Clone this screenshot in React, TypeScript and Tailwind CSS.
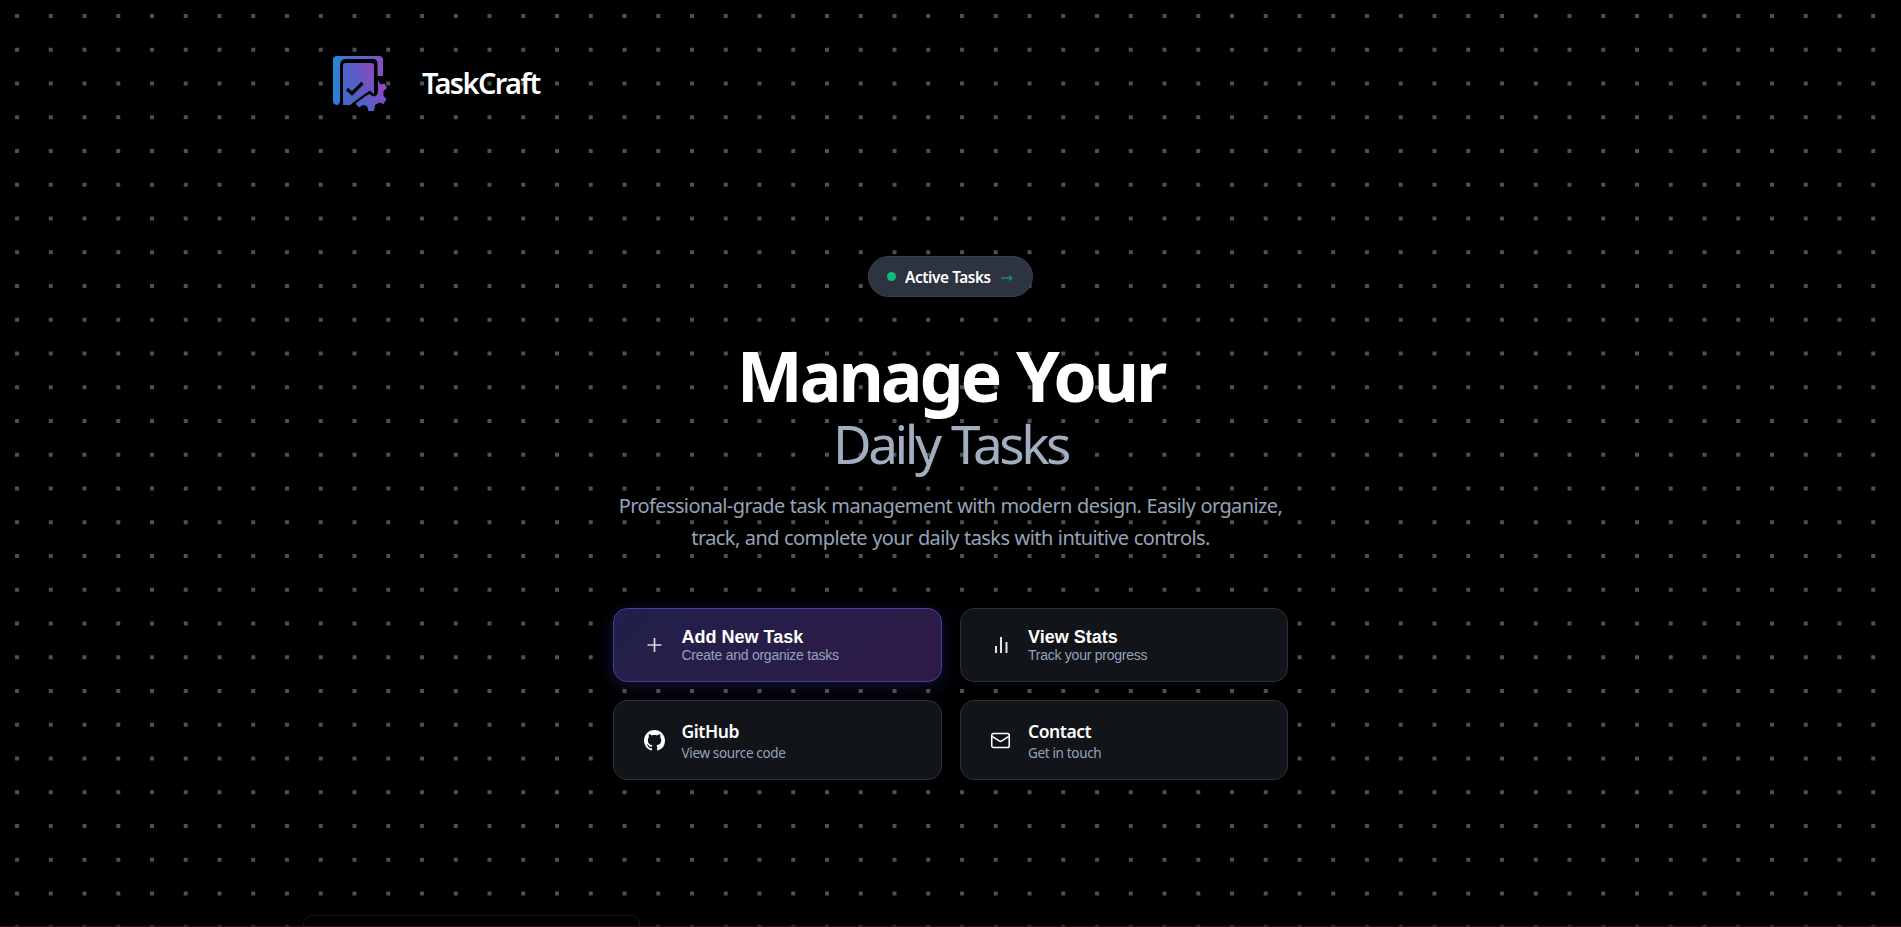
import { Mail } from "lucide-react";
import type { ReactNode } from "react";

const SANS = "font-['Noto_Sans','Open_Sans',sans-serif]";

const STEP = 33.75;
const DOT_PATH = Array.from({ length: 28 * 57 }, (_, i) => {
  const x = 15 + (i % 57) * STEP;
  const y = 14.1 + Math.floor(i / 57) * STEP;
  return `M${x} ${y}h4v4h-4z`;
}).join("");

function Dots() {
  return (
    <svg className="absolute inset-0 h-full w-full" aria-hidden="true">
      <path d={DOT_PATH} fill="#505050" />
    </svg>
  );
}

function Logo() {
  return (
    <svg width="56" height="58" viewBox="0 0 56 58" fill="none" className="mt-[4px]">
      <defs>
        <linearGradient id="frame" x1="0" y1="20" x2="54" y2="26" gradientUnits="userSpaceOnUse">
          <stop stopColor="#2387d6" />
          <stop offset="0.45" stopColor="#5d64cc" />
          <stop offset="1" stopColor="#9548c4" />
        </linearGradient>
        <linearGradient id="page" x1="8" y1="40" x2="46" y2="28" gradientUnits="userSpaceOnUse">
          <stop stopColor="#3f6cc8" />
          <stop offset="0.5" stopColor="#5a5cc6" />
          <stop offset="1" stopColor="#8a4bbd" />
        </linearGradient>
        <linearGradient id="gear" x1="22" y1="54" x2="52" y2="32" gradientUnits="userSpaceOnUse">
          <stop stopColor="#3b6cc8" />
          <stop offset="1" stopColor="#9146c2" />
        </linearGradient>
      </defs>
      <path d="M4 0H46Q50 0 50 4V20H44.500V8Q44.500 3 40 3H13Q7 3 7 9V46L5 49Q0 49 0 45V4Q0 0 4 0Z" fill="url(#frame)" />
      <path d="M10 10Q10 7 13 7H38Q41 7 41 10V38L37 34.500L29 40L17 49H10Z" fill="url(#page)" />
      <path d="M45 24L47.500 28.500L51.500 27.500L54 32L50.500 35V40L53.500 43L50.500 48L46.500 46.500L42 49L41 55H35.500L34 50L30 49L26 51.500L22.500 47.500L32 40.500L36 38Q44 44 45 35Z" fill="url(#gear)" />
      <path d="M14 33L19 37.500L29.500 27" stroke="#000" strokeWidth="3.2" />
    </svg>
  );
}

function PlusIcon() {
  return (
    <svg width="24" height="24" viewBox="0 0 24 24" fill="none" stroke="#d9d8e4" strokeWidth="1.7">
      <path d="M12.500 5v14M5.500 12h14" />
    </svg>
  );
}

function BarsIcon() {
  return (
    <svg width="24" height="24" viewBox="0 0 24 24" fill="none" stroke="#e1e3e5" strokeWidth="2">
      <path d="M7 20v-7M12 20V4M17.500 20V9" />
    </svg>
  );
}

function GithubIcon() {
  return (
    <svg width="21" height="21" viewBox="0 0 16 16" fill="#fff">
      <path d="M8 0C3.58 0 0 3.58 0 8c0 3.54 2.29 6.53 5.47 7.59.4.07.55-.17.55-.38 0-.19-.01-.82-.01-1.49-2.01.37-2.53-.49-2.69-.94-.09-.23-.48-.94-.82-1.13-.28-.15-.68-.52-.01-.53.63-.01 1.08.58 1.23.82.72 1.21 1.87.87 2.33.66.07-.52.28-.87.51-1.07-1.78-.2-3.64-.89-3.64-3.95 0-.87.31-1.59.82-2.15-.08-.2-.36-1.02.08-2.12 0 0 .67-.21 2.2.82.64-.18 1.32-.27 2-.27s1.36.09 2 .27c1.53-1.04 2.2-.82 2.2-.82.44 1.1.16 1.92.08 2.12.51.56.82 1.27.82 2.15 0 3.07-1.87 3.75-3.65 3.95.29.25.54.73.54 1.48 0 1.07-.01 1.93-.01 2.2 0 .21.15.46.55.38A8.01 8.01 0 0 0 16 8c0-4.42-3.58-8-8-8z" />
    </svg>
  );
}

type CardProps = { icon: ReactNode; title: ReactNode; note: ReactNode; className: string };

function Card({ icon, title, note, className }: CardProps) {
  return (
    <button className={`flex items-center rounded-[14px] border pl-[27px] text-left ${className}`}>
      <span className="flex w-[26px] shrink-0 justify-center">{icon}</span>
      <span className="ml-[14.500px] flex flex-col whitespace-nowrap">
        {title}
        {note}
      </span>
    </button>
  );
}

const ARIAL_TITLE = "font-['Liberation_Sans',Arial,sans-serif] text-[18px] leading-[20px] font-bold text-white";
const ARIAL_NOTE = "font-['Liberation_Sans',Arial,sans-serif] text-[14px] leading-[17px] tracking-[-0.25px] text-[#94a3b8]";
const LINK_TITLE = "pt-[2px] text-[17.5px] leading-[22px] font-semibold tracking-[-0.45px] text-white";
const LINK_NOTE = "pt-[1px] text-[13.5px] leading-[20px] tracking-[-0.34px] text-[#94a3b8]";
const DARK = "border-[#2a3039] bg-[#111418]";

export default function App() {
  return (
    <div className={`relative h-[927px] w-full overflow-hidden bg-black ${SANS}`}>
      <Dots />
      <div className="relative flex h-full flex-col">
        <header className="flex h-[166px] shrink-0 items-center pl-[333px]">
          <Logo />
          <h1 className="ml-[33px] text-[29px] font-semibold tracking-[-1.65px] text-white">TaskCraft</h1>
        </header>

        <main className="flex shrink-0 flex-col items-center pt-[90px]">
          <div className="flex h-[41px] w-[165px] items-center rounded-full border border-[#374151] bg-[#2d3340] pl-[18px] whitespace-nowrap">
            <span className="h-[9px] w-[9px] rounded-full bg-[#10b981]" />
            <span className="ml-[9px] w-[96px] pt-[1px] text-[15.3px] font-semibold tracking-[-0.38px] text-white">Active Tasks</span>
            <svg width="12" height="8" viewBox="0 0 12 8" fill="none" stroke="#10b981" className="mt-[3px]">
              <path d="M0 4H11M8 1.5L11 4L8 6.5" />
            </svg>
          </div>

          <h2 className="mt-[39px] flex flex-col items-center whitespace-nowrap">
            <span className="text-[70px] leading-[79px] font-bold tracking-[-3.2px] [word-spacing:2px] text-white">Manage Your</span>
            <span className="text-[53px] leading-[58px] font-normal tracking-[-3.4px] [word-spacing:2px] text-[#a0aec0]">Daily Tasks</span>
          </h2>

          <p className="mt-[17px] text-center text-[20px] leading-[32px] tracking-[-0.6px] [word-spacing:0.6px] whitespace-nowrap text-[#94a3b8]">
            Professional-grade task management with modern design. Easily organize,
            <br />
            track, and complete your daily tasks with intuitive controls.
          </p>

          <div className="mt-[54px] grid w-[675px] grid-cols-2 grid-rows-[74px_80px] gap-[18px]">
            <Card
              icon={<PlusIcon />}
              title={<span className={ARIAL_TITLE}>Add New Task</span>}
              note={<span className={ARIAL_NOTE}>Create and organize tasks</span>}
              className="border-[#473da0] bg-linear-135 from-[#20204a] to-[#2e1a47] shadow-[0_4px_18px_rgba(79,70,229,0.25)]"
            />
            <Card
              icon={<BarsIcon />}
              title={<span className={ARIAL_TITLE}>View Stats</span>}
              note={<span className={ARIAL_NOTE}>Track your progress</span>}
              className={DARK}
            />
            <Card
              icon={<GithubIcon />}
              title={<span className={LINK_TITLE}>GitHub</span>}
              note={<span className={LINK_NOTE}>View source code</span>}
              className={DARK}
            />
            <Card
              icon={<Mail size={21} strokeWidth={1.8} color="#fff" />}
              title={<span className={LINK_TITLE}>Contact</span>}
              note={<span className={LINK_NOTE}>Get in touch</span>}
              className={DARK}
            />
          </div>
        </main>

        <section className="mt-[135px] ml-[303px] h-[60px] w-[337px] shrink-0 rounded-t-[9px] border border-[#191919] bg-black" />
      </div>
      <div className="absolute inset-x-0 bottom-0 h-px bg-[#2b1417]" />
    </div>
  );
}
